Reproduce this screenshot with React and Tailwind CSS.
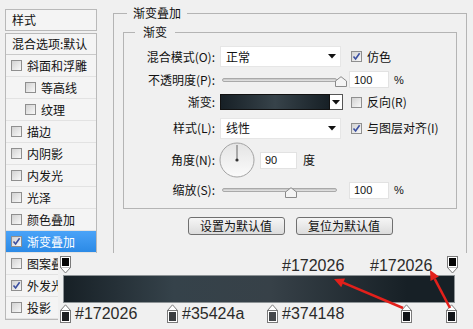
import React from 'react'

const layers = [
  { label: '斜面和浮雕' },
  { label: '等高线', indent: true },
  { label: '纹理', indent: true },
  { label: '描边' },
  { label: '内阴影' },
  { label: '内发光' },
  { label: '光泽' },
  { label: '颜色叠加' },
  { label: '渐变叠加', checked: true, active: true },
  { label: '图案叠加' },
  { label: '外发光', checked: true },
  { label: '投影' },
]

function Check({ checked }) {
  return (
    <span className="flex h-[11px] w-[11px] shrink-0 items-center justify-center border border-[#8f8f8f] bg-gradient-to-br from-[#d2d2d2] to-[#f8f8f8]">
      {checked && (
        <svg width="9" height="9" viewBox="0 0 9 9">
          <path d="M1.5 4.5 L3.6 7 L7.6 1.2" fill="none" stroke="#3b4fa0" strokeWidth="1.6" />
        </svg>
      )}
    </span>
  )
}

function Arrow() {
  return (
    <svg width="8" height="5" viewBox="0 0 8 5">
      <path d="M0 0 H8 L4 4.5 Z" fill="#111" />
    </svg>
  )
}

function Slider({ thumb }) {
  return (
    <div className="relative flex h-[17px] w-[121px] items-center">
      <div className="ml-[2px] h-[4px] w-[115px] rounded-full border border-[#a9a9a9] bg-gradient-to-b from-[#c4c4c4] to-[#e6e6e6]" />
      <svg className="absolute top-[5px]" style={{ left: thumb }} width="12" height="11" viewBox="0 0 12 11">
        <path d="M0.5 10.5 V5 L6 0.7 L11.5 5 V10.5 Z" fill="#f4f4f4" stroke="#8a8a8a" />
      </svg>
    </div>
  )
}

function Field({ value, w = 'w-[40px]' }) {
  return (
    <div className={`flex h-[17px] ${w} items-center border border-[#e2e2e2] bg-white pl-[4px] text-[11px] font-['Liberation_Sans',sans-serif]`}>
      {value}
    </div>
  )
}

function Label({ children }) {
  return <div className="w-[92px] shrink-0 pr-[1px] text-right">{children}</div>
}

function Select({ value }) {
  return (
    <div className="flex h-[21px] w-[121px] items-center justify-between border border-[#e6e6e6] bg-white pl-[5px] pr-[4px]">
      <span>{value}</span>
      <Arrow />
    </div>
  )
}

function TopStop() {
  return (
    <svg width="11" height="18" viewBox="0 0 11 18">
      <rect x="0.5" y="0.5" width="10" height="11" fill="#fff" stroke="#7a7a7a" />
      <rect x="2" y="2" width="7" height="8" fill="#050505" />
      <path d="M0.5 11.5 L5.5 17 L10.5 11.5" fill="#fff" stroke="#7a7a7a" />
    </svg>
  )
}

function BottomStop({ color }) {
  return (
    <svg width="11" height="19" viewBox="0 0 11 19">
      <path d="M0.5 6.5 L5.5 0.8 L10.5 6.5" fill="#fff" stroke="#7a7a7a" />
      <rect x="0.5" y="6.5" width="10" height="12" fill="#fff" stroke="#7a7a7a" />
      <rect x="2" y="8" width="7" height="9" fill={color} />
    </svg>
  )
}

const bottomStops = [
  { x: 2, color: '#1b1d1f', label: '#172026' },
  { x: 109, color: '#3a3d40', label: '#35424a' },
  { x: 209, color: '#44474a', label: '#374148' },
  { x: 343, color: '#111418' },
  { x: 388, color: '#111418' },
]

export default function App() {
  return (
    <div className="relative flex h-[329px] w-[473px] overflow-hidden bg-[#f0f0f0] text-[12px] leading-[16px] text-[#111] font-['Noto_Sans_CJK_SC',sans-serif]">
      {/* left list */}
      <div className="ml-[5px] mt-[9px] w-[92px] shrink-0">
        <div className="flex h-[22px] items-center border border-[#b9b9b9] bg-[#f4f4f4] pl-[6px]">样式</div>
        <div className="mt-[2px] border border-[#b9b9b9] bg-[#f4f4f4]">
          <div className="flex h-[21px] items-center border-b border-[#c9c9c9] pl-[6px]">混合选项:默认</div>
          {layers.map((l) => (
            <div
              key={l.label}
              className={`flex h-[22px] items-center gap-[5px] whitespace-nowrap border-b border-[#e2e2e2] ${l.indent ? 'pl-[19px]' : 'pl-[5px]'} ${l.active ? 'bg-gradient-to-b from-[#4aa3f8] to-[#2b8ae6] text-white' : ''}`}
            >
              <Check checked={l.checked} />
              <span>{l.label}</span>
            </div>
          ))}
        </div>
      </div>

      {/* right settings */}
      <fieldset className="ml-[16px] mt-[5px] h-[360px] w-[354px] shrink-0 border border-[#b4b4b4]">
        <legend className="ml-[13px] px-[6px] leading-[16px]">渐变叠加</legend>
        <fieldset className="ml-[9px] mt-[3px] w-[334px] border border-[#b4b4b4] pb-[9px]">
          <legend className="ml-[11px] px-[8px] leading-[16px]">渐变</legend>

          <div className="mt-[6px] flex h-[21px] items-center">
            <Label>混合模式(O):</Label>
            <div className="ml-[4px]"><Select value="正常" /></div>
            <div className="ml-[10px]"><Check checked /></div>
            <span className="ml-[5px]">仿色</span>
          </div>

          <div className="mt-[4px] flex h-[17px] items-center">
            <Label>不透明度(P):</Label>
            <div className="ml-[4px]"><Slider thumb={115} /></div>
            <div className="ml-[8px]"><Field value="100" /></div>
            <span className="ml-[5px] font-['Liberation_Sans',sans-serif] text-[11px]">%</span>
          </div>

          <div className="mt-[6px] flex h-[16px] items-center">
            <Label>渐变:</Label>
            <div className="ml-[4px] flex">
              <div className="h-[16px] w-[110px] border border-[#111] bg-gradient-to-r from-[#172026] via-[#37434a] to-[#172026]" />
              <div className="flex h-[16px] w-[13px] items-center justify-center border border-l-0 border-[#555] bg-white">
                <Arrow />
              </div>
            </div>
            <div className="ml-[8px]"><Check /></div>
            <span className="ml-[5px]">反向(R)</span>
          </div>

          <div className="mt-[8px] flex h-[20px] items-center">
            <Label>样式(L):</Label>
            <div className="ml-[4px]"><Select value="线性" /></div>
            <div className="ml-[10px]"><Check checked /></div>
            <span className="ml-[5px]">与图层对齐(I)</span>
          </div>

          <div className="mt-[4px] flex h-[36px] items-center">
            <Label>角度(N):</Label>
            <svg className="ml-[3px]" width="36" height="36" viewBox="0 0 36 36">
              <defs>
                <linearGradient id="dial" x1="0" y1="0" x2="0" y2="1">
                  <stop offset="0" stopColor="#e4e4e4" />
                  <stop offset="1" stopColor="#fbfbfb" />
                </linearGradient>
              </defs>
              <circle cx="18" cy="18" r="17" fill="url(#dial)" stroke="#a3a3a3" />
              <line x1="18" y1="18" x2="18" y2="3" stroke="#666" strokeWidth="1" />
              <circle cx="18" cy="18" r="1.6" fill="#333" />
            </svg>
            <div className="ml-[5px]"><Field value="90" w="w-[37px]" /></div>
            <span className="ml-[6px]">度</span>
          </div>

          <div className="mt-[3px] flex h-[18px] items-center">
            <Label>缩放(S):</Label>
            <div className="ml-[4px]"><Slider thumb={65} /></div>
            <div className="ml-[8px]"><Field value="100" /></div>
            <span className="ml-[5px] font-['Liberation_Sans',sans-serif] text-[11px]">%</span>
          </div>
        </fieldset>

        <div className="mt-[8px] flex justify-center gap-[11px]">
          <button className="h-[18px] w-[97px] rounded-[3px] border border-[#707070] bg-gradient-to-b from-[#f6f6f6] to-[#dcdcdc] text-[12px] leading-[16px]">设置为默认值</button>
          <button className="h-[18px] w-[97px] rounded-[3px] border border-[#707070] bg-gradient-to-b from-[#f6f6f6] to-[#dcdcdc] text-[12px] leading-[16px]">复位为默认值</button>
        </div>
      </fieldset>

      {/* gradient editor pasted over the bottom */}
      <div className="absolute left-[58px] top-[253px] h-[76px] w-[415px] bg-[#f0f0f0] font-['Liberation_Sans',sans-serif] text-[16px] leading-[18px] text-[#2a2a2a]">
        <div className="relative h-[22px]">
          <div className="absolute left-[2px] top-[3px]"><TopStop /></div>
          <span className="absolute left-[224px] top-[4px]">#172026</span>
          <span className="absolute left-[312px] top-[4px]">#172026</span>
          <div className="absolute left-[389px] top-[3px]"><TopStop /></div>
        </div>
        <div className="ml-[5px] h-[28px] w-[392px] border border-[#8d9396] bg-[linear-gradient(to_right,#172026_0%,#35424a_28%,#374148_53%,#172026_88%,#172026_100%)]" />
        <div className="relative h-[26px]">
          {bottomStops.map((s) => (
            <div key={s.x} className="absolute top-[1px] flex items-end" style={{ left: s.x }}>
              <BottomStop color={s.color} />
              {s.label && <span className="ml-[4px]">{s.label}</span>}
            </div>
          ))}
        </div>
        <svg className="absolute left-0 top-0" width="415" height="76" viewBox="0 0 415 76">
          <line x1="345" y1="55" x2="285" y2="29.6" stroke="#e3201b" strokeWidth="2.5" />
          <polygon points="276,26 287,25.6 283.2,34.2" fill="#e3201b" />
          <line x1="392" y1="55" x2="376.7" y2="25.9" stroke="#e3201b" strokeWidth="2.5" />
          <polygon points="372,17 380.9,23.6 372.5,28.1" fill="#e3201b" />
        </svg>
      </div>
    </div>
  )
}
